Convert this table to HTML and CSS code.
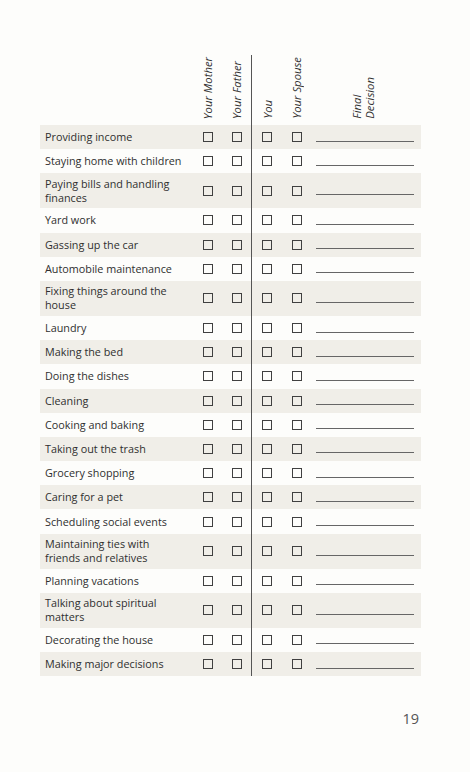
FILE: index.html
```html
<!DOCTYPE html>
<html>
<head>
<meta charset="utf-8">
<link rel="stylesheet" href="styles.css">
</head>
<body>
<div class="page">
  <div class="sheet">
    <div class="head">
      <div class="hlabel"></div>
      <div class="hcell"><span class="vt">Your Mother</span></div>
      <div class="hcell"><span class="vt">Your Father</span></div>
      <div class="hcell divider"><span class="vt">You</span></div>
      <div class="hcell"><span class="vt">Your Spouse</span></div>
      <div class="hcell final"><span class="vt">Final<br>Decision</span></div>
    </div>
    <div class="rows" id="rows"></div>
  </div>
  <div class="pnum">19</div>
</div>
<script>
const items = [
  ["Providing income",0],["Staying home with children",0],["Paying bills and handling<br>finances",1],
  ["Yard work",0],["Gassing up the car",0],["Automobile maintenance",0],
  ["Fixing things around the<br>house",1],["Laundry",0],["Making the bed",0],["Doing the dishes",0],
  ["Cleaning",0],["Cooking and baking",0],["Taking out the trash",0],["Grocery shopping",0],
  ["Caring for a pet",0],["Scheduling social events",0],["Maintaining ties with<br>friends and relatives",1],
  ["Planning vacations",0],["Talking about spiritual<br>matters",1],["Decorating the house",0],["Making major decisions",0]
];
const rows = document.getElementById('rows');
items.forEach((it, i) => {
  const r = document.createElement('div');
  r.className = 'row' + (i % 2 === 0 ? ' shaded' : '') + (it[1] ? ' two' : '');
  r.innerHTML = '<div class="label"><span>' + it[0] + '</span></div>' +
    '<div class="cell"><span class="box"></span></div>' +
    '<div class="cell"><span class="box"></span></div>' +
    '<div class="cell divider"><span class="box"></span></div>' +
    '<div class="cell"><span class="box"></span></div>' +
    '<div class="lcell"><span class="line"></span></div>';
  rows.appendChild(r);
});
</script>
</body>
</html>
```
FILE: styles.css
```css
html, body {
  margin: 0;
  padding: 0;
  background: #fdfdfb;
}
.page {
  width: 470px;
  height: 772px;
  font-family: "Open Sans", "Noto Sans", sans-serif;
  color: #2f2f2f;
  padding-top: 55px;
  box-sizing: border-box;
}
.sheet {
  margin-left: 40px;
  width: 381px;
}
.head, .row {
  display: grid;
  grid-template-columns: 153px 29px 29px 31px 29px 110px;
}
.head {
  height: 70px;
}
.hcell {
  display: flex;
  justify-content: center;
  align-items: flex-end;
  padding-bottom: 6px;
}
.hcell.final {
  padding-right: 7px;
}
.vt {
  writing-mode: vertical-rl;
  transform: rotate(180deg);
  font-style: italic;
  font-size: 11.3px;
  line-height: 13px;
  color: #333;
  white-space: nowrap;
}
.divider {
  border-left: 1px solid #555;
}
.row {
  min-height: 24.2px;
}
.row.shaded {
  background: #f0eee8;
}
.label {
  font-size: 10.8px;
  line-height: 14px;
  padding: 4px 0 4px 5px;
  display: flex;
  align-items: center;
  white-space: nowrap;
}
.row.two .label {
  padding: 3.5px 0 3.5px 5px;
}
.cell {
  display: flex;
  align-items: center;
  justify-content: center;
}
.cell.divider {
  padding-right: 1px;
}
.box {
  width: 8px;
  height: 8px;
  border: 1.7px solid #404040;
}
.lcell {
  display: flex;
  align-items: center;
  padding-left: 5px;
  padding-right: 7px;
}
.line {
  display: block;
  width: 98px;
  height: 1px;
  background: #666;
  margin-top: 8px;
}
.pnum {
  margin-top: 33px;
  width: 419px;
  text-align: right;
  font-size: 14.5px;
  font-weight: 400;
  color: #555;
}
```
